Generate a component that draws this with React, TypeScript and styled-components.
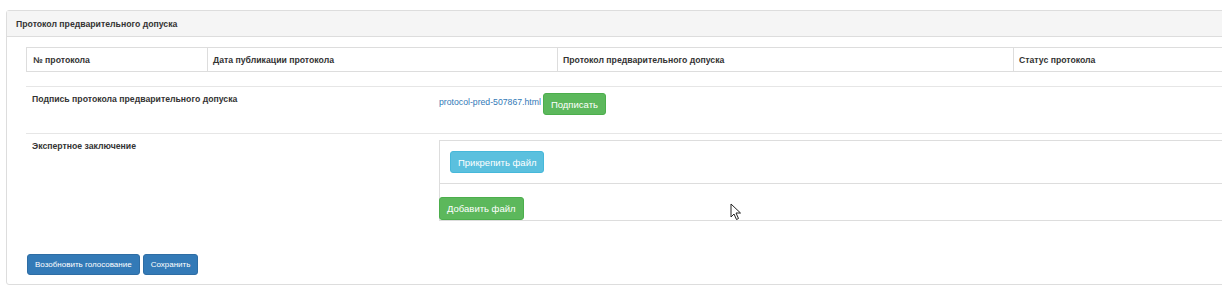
import styled, { createGlobalStyle } from "styled-components";

const GlobalStyle = createGlobalStyle`
  html, body {
    margin: 0;
    padding: 0;
    background: #fff;
    overflow: hidden;
  }
  body {
    font-family: "Liberation Sans", Arial, sans-serif;
    color: #333;
  }
`;

const Page = styled.div`
  width: 1222px;
  height: 286px;
  padding-top: 10px;
  padding-left: 6px;
  box-sizing: border-box;
`;

const Panel = styled.div`
  width: 1240px;
  border: 1px solid #dddddd;
  border-radius: 3px;
  background: #fff;
`;

const PanelHeading = styled.div`
  height: 25px;
  display: flex;
  align-items: center;
  padding-left: 9px;
  background: #f5f5f5;
  border-bottom: 1px solid #dddddd;
  font-size: 8.7px;
  font-weight: bold;
  color: #333;
`;

const PanelBody = styled.div`
  padding: 10px 0 9px 19px;
`;

const HeadTable = styled.div`
  display: grid;
  grid-template-columns: 180px 350px 456px 1fr;
  border: 1px solid #dddddd;
  border-right: none;
  height: 25px;
  box-sizing: border-box;
`;

const HeadCell = styled.div<{ first?: boolean }>`
  display: flex;
  align-items: center;
  padding-left: ${({ first }) => (first ? 6 : 5)}px;
  border-left: ${({ first }) => (first ? "none" : "1px solid #dddddd")};
  font-size: 8.7px;
  font-weight: bold;
  color: #333;
`;

const FormRow = styled.div<{ top: number }>`
  display: grid;
  grid-template-columns: 413px 1fr;
  border-top: 1px solid #e6e6e6;
  margin-top: ${({ top }) => top}px;
  padding-top: 6px;
`;

const Label = styled.div`
  padding-left: 6px;
  padding-top: 1px;
  font-size: 8.7px;
  font-weight: bold;
  color: #333;
  line-height: 11px;
`;

const Value = styled.div`
  display: flex;
  align-items: flex-end;
  padding-bottom: 18px;
`;

const FileLink = styled.a`
  color: #337ab7;
  font-size: 8.7px;
  text-decoration: none;
  line-height: 11px;
  margin-bottom: 7px;
  margin-right: 2px;
`;

const Button = styled.button<{ kind: "success" | "info" | "primary"; small?: boolean }>`
  font-family: "Liberation Sans", Arial, sans-serif;
  font-size: ${({ small }) => (small ? 8 : 9.5)}px;
  color: #fff;
  height: ${({ small }) => (small ? 21 : 22)}px;
  padding: 0 7px;
  border-radius: 3px;
  cursor: pointer;
  background: ${({ kind }) =>
    kind === "success" ? "#5cb85c" : kind === "info" ? "#5bc0de" : "#337ab7"};
  border: 1px solid
    ${({ kind }) =>
      kind === "success" ? "#4cae4c" : kind === "info" ? "#46b8da" : "#2e6da4"};
`;

const FileArea = styled.div`
  border-left: 1px solid #dddddd;
  border-bottom: 1px solid #dddddd;
`;

const FileBox = styled.div`
  border-top: 1px solid #dddddd;
  border-bottom: 1px solid #dddddd;
  padding: 10px 0 10px 10px;
  margin-bottom: 13px;
`;

const AddButton = styled(Button)`
  margin-left: -1px;
  height: 23px;
  display: block;
`;

const Footer = styled.div`
  display: flex;
  gap: 3px;
  margin-top: 33px;
  padding-left: 1px;
`;

const Cursor = styled.svg`
  position: absolute;
  left: 730px;
  top: 203px;
`;

export default function App() {
  return (
    <Page>
      <GlobalStyle />
      <Panel>
        <PanelHeading>Протокол предварительного допуска</PanelHeading>
        <PanelBody>
          <HeadTable>
            <HeadCell first>№ протокола</HeadCell>
            <HeadCell>Дата публикации протокола</HeadCell>
            <HeadCell>Протокол предварительного допуска</HeadCell>
            <HeadCell>Статус протокола</HeadCell>
          </HeadTable>
          <FormRow top={14}>
            <Label>Подпись протокола предварительного допуска</Label>
            <Value>
              <FileLink href="#">protocol-pred-507867.html</FileLink>
              <Button kind="success">Подписать</Button>
            </Value>
          </FormRow>
          <FormRow top={0}>
            <Label>Экспертное заключение</Label>
            <FileArea>
              <FileBox>
                <Button kind="info">Прикрепить файл</Button>
              </FileBox>
              <AddButton kind="success">Добавить файл</AddButton>
            </FileArea>
          </FormRow>
          <Footer>
            <Button kind="primary" small>
              Возобновить голосование
            </Button>
            <Button kind="primary" small>
              Сохранить
            </Button>
          </Footer>
        </PanelBody>
      </Panel>
      <Cursor width="12" height="18" viewBox="0 0 12 18">
        <path d="M1 1 L1 14 L4 11 L6.5 16.5 L8.5 15.5 L6 10 L10.5 10 Z" fill="#fff" stroke="#222" strokeWidth="1" strokeLinejoin="round" />
      </Cursor>
    </Page>
  );
}
